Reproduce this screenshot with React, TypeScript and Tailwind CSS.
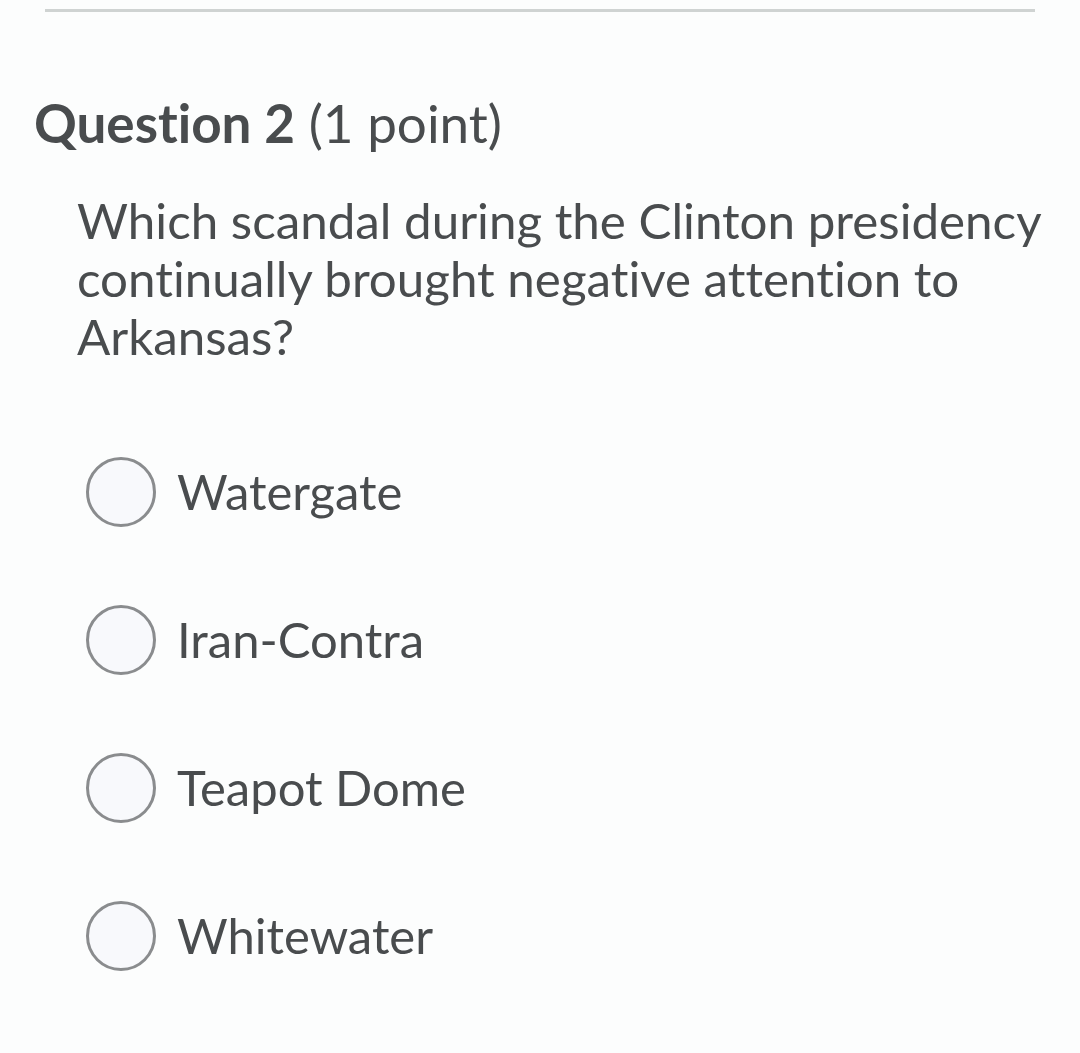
import React from 'react';

const options = ['Watergate', 'Iran-Contra', 'Teapot Dome', 'Whitewater'];

const App: React.FC = () => {
  return (
    <div
      className="w-[1080px] h-[1053px] bg-[#fcfdfd] text-[#494c4e] overflow-hidden [font-variant-ligatures:none]"
      style={{ fontFamily: 'Lato, "Open Sans", sans-serif' }}
    >
      <div className="pt-[9px] px-[45px]">
        <div className="h-[3px] bg-[#cfd3d2]" />
      </div>

      <h2 className="mt-[81px] ml-[34px] text-[53px] leading-[60px] whitespace-nowrap">
        <span className="font-bold">Question 2</span> <span>(1 point)</span>
      </h2>

      <p className="mt-[38px] ml-[77px] w-[990px] text-[49.3px] leading-[58px]">
        Which scandal during the Clinton presidency continually brought negative attention to Arkansas?
      </p>

      <div className="mt-[53px] flex flex-col">
        {options.map((option) => (
          <label key={option} className="flex items-center h-[148px] pl-[86px]">
            <span className="w-[70px] h-[70px] rounded-full border-[3px] border-[#8a8c8e] bg-[#f8f9fc] shrink-0" />
            <span className="ml-[21px] -mt-[3px] text-[49px] leading-[58px]">{option}</span>
          </label>
        ))}
      </div>
    </div>
  );
};

export default App;
